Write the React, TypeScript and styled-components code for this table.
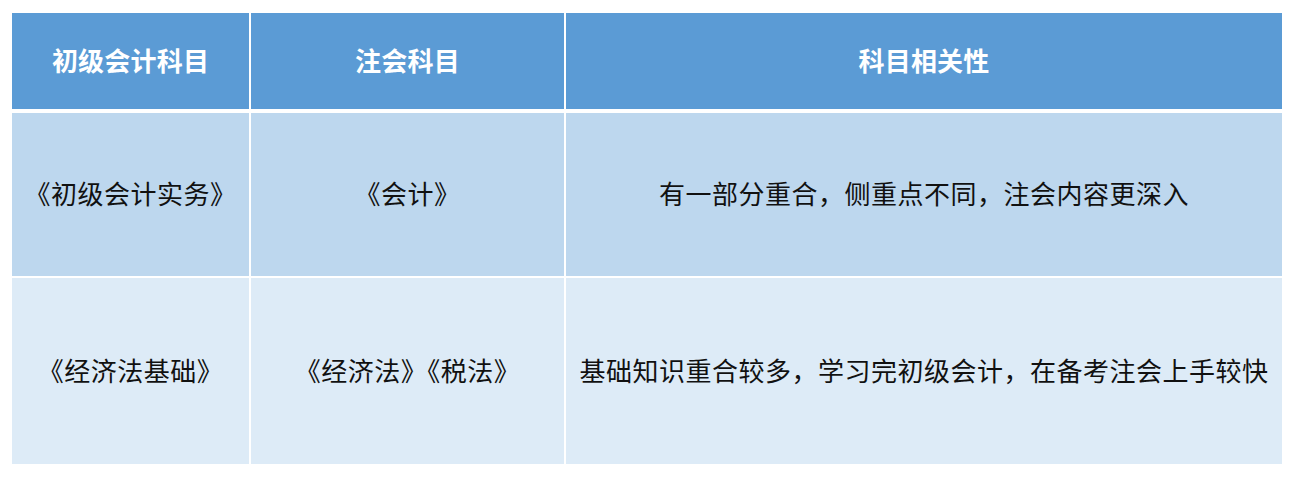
import React from 'react';
import styled, { createGlobalStyle } from 'styled-components';

const GlobalStyle = createGlobalStyle`
  body {
    margin: 0;
    background: #fff;
    font-family: "Noto Sans CJK SC", "Noto Sans", sans-serif;
  }
`;

const Page = styled.div`
  padding: 13px 12px 0 12px;
`;

const Table = styled.div`
  width: 1270px;
  display: flex;
  flex-direction: column;
  gap: 2px;
`;

const Row = styled.div<{ $height: number; $header?: boolean }>`
  display: grid;
  grid-template-columns: 237px 313px 716px;
  column-gap: 2px;
  height: ${(p) => p.$height}px;
  margin-bottom: ${(p) => (p.$header ? '2px' : '0')};
`;

const Cell = styled.div<{ $bg: string; $header?: boolean }>`
  background: ${(p) => p.$bg};
  display: flex;
  align-items: center;
  justify-content: center;
  padding-bottom: 3px;
  font-size: 26px;
  line-height: 1;
  letter-spacing: ${(p) => (p.$header ? '0.2px' : '0.5px')};
  color: ${(p) => (p.$header ? '#ffffff' : '#111111')};
  font-weight: ${(p) => (p.$header ? 700 : 400)};
  white-space: nowrap;
`;

const headers = ['初级会计科目', '注会科目', '科目相关性'];

const rows = [
  {
    height: 163,
    bg: '#bdd7ee',
    cells: ['《初级会计实务》', '《会计》', '有一部分重合，侧重点不同，注会内容更深入'],
  },
  {
    height: 186,
    bg: '#ddebf7',
    cells: ['《经济法基础》', '《经济法》《税法》', '基础知识重合较多，学习完初级会计，在备考注会上手较快'],
  },
];

const App: React.FC = () => {
  return (
    <>
      <GlobalStyle />
      <Page>
        <Table>
          <Row $height={96} $header>
            {headers.map((h) => (
              <Cell key={h} $bg="#5b9bd5" $header>
                {h}
              </Cell>
            ))}
          </Row>
          {rows.map((r, i) => (
            <Row key={i} $height={r.height}>
              {r.cells.map((c) => (
                <Cell key={c} $bg={r.bg}>
                  {c}
                </Cell>
              ))}
            </Row>
          ))}
        </Table>
      </Page>
    </>
  );
};

export default App;
